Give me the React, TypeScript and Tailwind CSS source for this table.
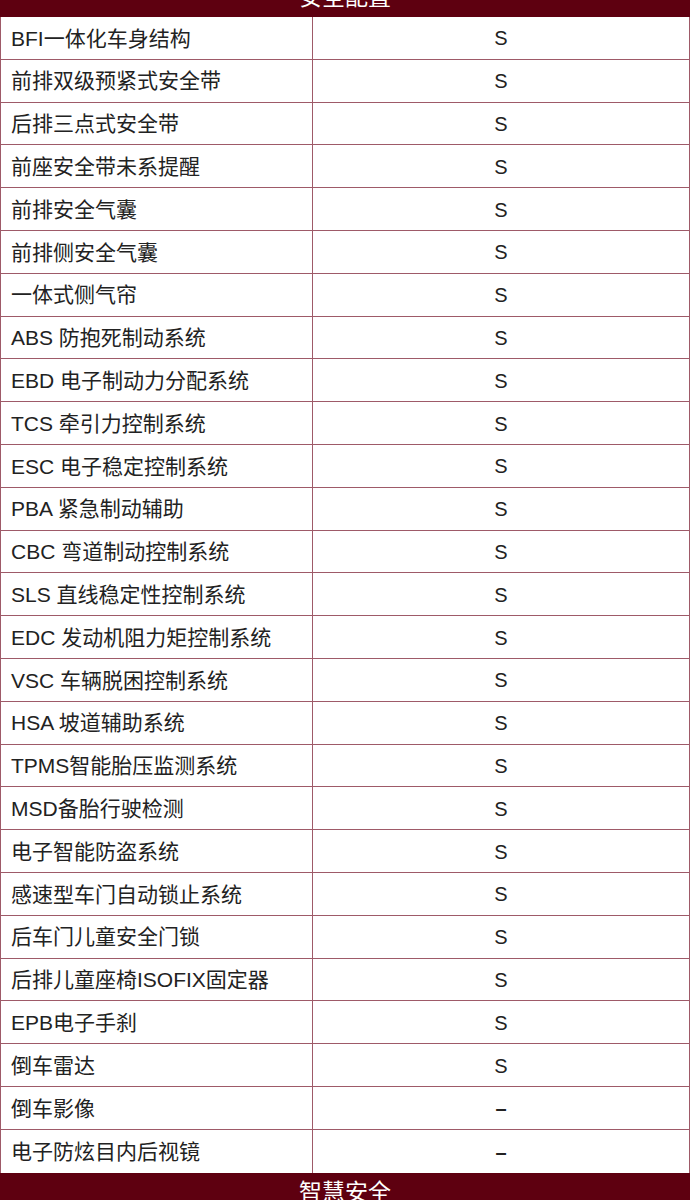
import React from "react";

const rows: [string, string][] = [
  ["BFI一体化车身结构", "S"],
  ["前排双级预紧式安全带", "S"],
  ["后排三点式安全带", "S"],
  ["前座安全带未系提醒", "S"],
  ["前排安全气囊", "S"],
  ["前排侧安全气囊", "S"],
  ["一体式侧气帘", "S"],
  ["ABS 防抱死制动系统", "S"],
  ["EBD 电子制动力分配系统", "S"],
  ["TCS 牵引力控制系统", "S"],
  ["ESC 电子稳定控制系统", "S"],
  ["PBA 紧急制动辅助", "S"],
  ["CBC 弯道制动控制系统", "S"],
  ["SLS 直线稳定性控制系统", "S"],
  ["EDC 发动机阻力矩控制系统", "S"],
  ["VSC 车辆脱困控制系统", "S"],
  ["HSA 坡道辅助系统", "S"],
  ["TPMS智能胎压监测系统", "S"],
  ["MSD备胎行驶检测", "S"],
  ["电子智能防盗系统", "S"],
  ["感速型车门自动锁止系统", "S"],
  ["后车门儿童安全门锁", "S"],
  ["后排儿童座椅ISOFIX固定器", "S"],
  ["EPB电子手刹", "S"],
  ["倒车雷达", "S"],
  ["倒车影像", "–"],
  ["电子防炫目内后视镜", "–"],
];

function SectionHeader({ title }: { title: string }) {
  return (
    <div className="flex h-[40px] items-center justify-center bg-[#5e0010] text-[23px] text-white">
      {title}
    </div>
  );
}

export default function App() {
  return (
    <div
      className="h-[1200px] w-[690px] overflow-hidden bg-white"
      style={{ fontFamily: '"Liberation Sans", "Noto Sans CJK SC", sans-serif' }}
    >
      <div className="-mt-[23px]">
        <SectionHeader title="安全配置" />
      </div>
      <div className="border-x border-[#9e5a68]">
        {rows.map(([name, val], i) => (
          <div
            key={name}
            className={`grid h-[42.8px] grid-cols-[312px_1fr] ${i < rows.length - 1 ? "border-b border-[#9e5a68]" : ""}`}
          >
            <div className="flex items-center border-r border-[#9e5a68] pl-[10px] pt-[1px] text-[21px] text-[#222]">
              {name}
            </div>
            <div className={`flex items-center justify-center pt-[1px] text-[20px] text-[#222] ${val === "S" ? "" : "font-bold"}`}>
              {val}
            </div>
          </div>
        ))}
      </div>
      <SectionHeader title="智慧安全" />
    </div>
  );
}
